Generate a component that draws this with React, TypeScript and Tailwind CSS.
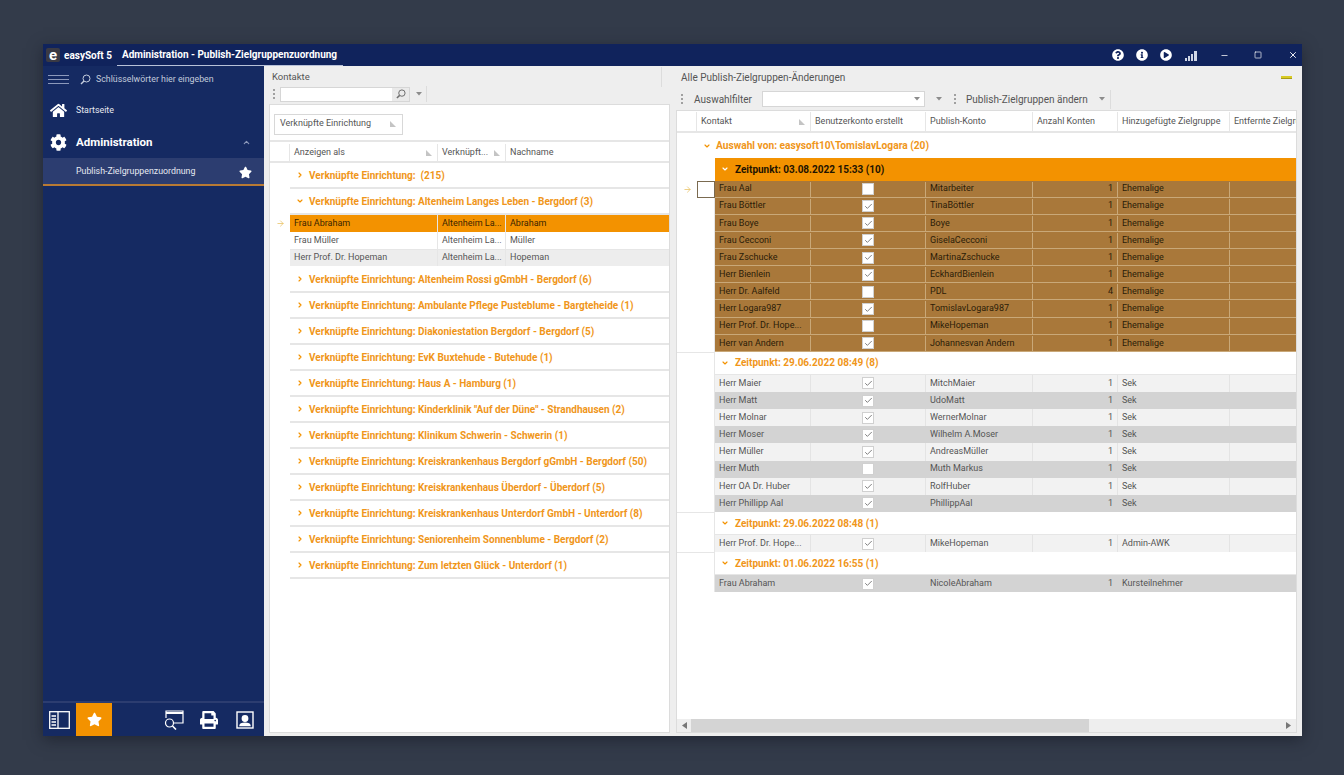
import React from "react";
import { FaHome, FaCog, FaStar, FaQuestionCircle, FaInfoCircle, FaPlayCircle, FaPrint } from "react-icons/fa";
import { ChevronRight, ChevronDown, ChevronUp, ArrowRight, Check, Minus, Square, X } from "lucide-react";

const FONT = "font-['Roboto','Noto_Sans',sans-serif]";

function SortMark() {
  return (
    <svg width="8" height="8" viewBox="0 0 8 8" className="shrink-0">
      <path d="M1 1 V7 H7 Z" fill="#c4c4c4" />
    </svg>
  );
}
function Caret() {
  return (
    <svg width="6" height="4" viewBox="0 0 6 4" className="shrink-0">
      <path d="M0 0 H6 L3 3.5 Z" fill="#8c8c8c" />
    </svg>
  );
}
function Grip() {
  return (
    <div className="flex flex-col gap-[2px] w-[2px] shrink-0">
      <div className="w-[2px] h-[2px] bg-[#a0a0a0]" />
      <div className="w-[2px] h-[2px] bg-[#a0a0a0]" />
      <div className="w-[2px] h-[2px] bg-[#a0a0a0]" />
    </div>
  );
}

function NavBottom() {
  return (
    <div className="h-[35px] border-t-2 border-[#2c3d70] flex items-center shrink-0">
      <div className="w-[27px] flex justify-end">
        <svg width="21" height="18" viewBox="0 0 21 18" fill="none" stroke="#fff" strokeWidth="1.3">
          <rect x="0.7" y="0.7" width="19.6" height="16.6" />
          <path d="M9 1V17" />
          <path d="M2.5 5H7M2.5 8H7M2.5 11H7M2.5 14H7" strokeWidth="1.5" />
        </svg>
      </div>
      <div className="ml-[6px] w-[36px] h-full bg-[#f39200] flex items-center justify-center">
        <FaStar className="text-white w-[15px] h-[15px]" />
      </div>
      <div className="ml-[52px]">
        <svg width="20" height="20" viewBox="0 0 20 20" fill="none" stroke="#fff" strokeWidth="1.2">
          <path d="M2 8V1H19V13H10" />
          <path d="M2 3H19" strokeWidth="2" />
          <circle cx="5.5" cy="13" r="4" />
          <path d="M8.5 16L12 19.5" strokeWidth="1.6" />
        </svg>
      </div>
      <FaPrint className="ml-[16px] text-white w-[18px] h-[18px]" />
      <div className="ml-[18px]">
        <svg width="18" height="18" viewBox="0 0 18 18" fill="none" stroke="#fff" strokeWidth="1.4">
          <rect x="1" y="1" width="16" height="16" />
          <circle cx="9" cy="7.5" r="2.7" fill="#fff" />
          <path d="M4 14.5C4.5 11.5 13.5 11.5 14 14.5Z" fill="#fff" />
        </svg>
      </div>
    </div>
  );
}

function Sidebar() {
  return (
    <aside className="w-[221px] shrink-0 bg-[#152a62] flex flex-col text-white">
      <div className="h-[26px] flex items-center">
        <div className="ml-[5px] w-[21px] flex flex-col gap-[3px]">
          <div className="h-px bg-[#8c99bb]" />
          <div className="h-px bg-[#8c99bb]" />
          <div className="h-px bg-[#8c99bb]" />
        </div>
        <svg width="11" height="11" viewBox="0 0 11 11" fill="none" stroke="#c6cede" strokeWidth="1" className="ml-[11px]">
          <circle cx="6.5" cy="4.5" r="3.5" />
          <path d="M4 7L1 10" strokeWidth="1.4" />
        </svg>
        <span className="ml-[5px] mt-[2px] text-[8.8px] text-[#c3cadb] whitespace-nowrap">Schlüsselwörter hier eingeben</span>
      </div>
      <div className="h-[33px] mt-[2px] flex items-center">
        <FaHome className="ml-[7px] w-[17px] h-[17px]" />
        <span className="ml-[9px] mt-[1px] text-[8.8px] text-[#e6e9f0]">Startseite</span>
      </div>
      <div className="h-[31px] flex items-center">
        <FaCog className="ml-[7px] w-[17px] h-[17px]" />
        <span className="ml-[9px] text-[11.5px] font-bold">Administration</span>
        <ChevronUp className="ml-auto mr-[13px] w-[9px] h-[9px] text-[#8c99bb]" strokeWidth={3} />
      </div>
      <div className="h-[28px] pt-[2px] bg-[#2c3d70] border-b-2 border-[#b87a34] flex items-center">
        <span className="ml-[33px] text-[8.8px] text-[#e6e9f0] whitespace-nowrap">Publish-Zielgruppenzuordnung</span>
        <FaStar className="ml-auto mr-[12px] w-[13px] h-[13px]" />
      </div>
      <div className="flex-1" />
      <NavBottom />
    </aside>
  );
}

function TitleBar() {
  return (
    <header className="h-[22px] shrink-0 bg-[#10235c] flex items-center text-white">
      <div className="ml-[3px] w-[14px] h-[14px] rounded-[2px] bg-[#3a3a44] flex items-center justify-center">
        <span className="text-[15px] leading-[12px] font-bold">e</span>
      </div>
      <span className="ml-[4px] text-[10px] font-bold whitespace-nowrap">easySoft 5</span>
      <div className="ml-[5px] h-full flex items-center border-b border-[#b8c1d8] pl-[5px] pr-[6px]">
        <span className="text-[10px] font-bold whitespace-nowrap">Administration - Publish-Zielgruppenzuordnung</span>
      </div>
      <FaQuestionCircle className="ml-auto w-[12px] h-[12px]" />
      <FaInfoCircle className="ml-[12px] w-[12px] h-[12px]" />
      <FaPlayCircle className="ml-[12px] w-[12px] h-[12px]" />
      <svg width="13" height="11" viewBox="0 0 13 11" className="ml-[13px]" fill="#cfd6e6">
        <rect x="0" y="8" width="2" height="3" />
        <rect x="3" y="6" width="2" height="5" />
        <rect x="6" y="4" width="2" height="7" />
        <rect x="9" y="1" width="3" height="10" />
      </svg>
      <Minus className="ml-[22px] w-[9px] h-[9px]" strokeWidth={2} />
      <Square className="ml-[25px] w-[8px] h-[8px]" strokeWidth={2} />
      <X className="ml-[26px] mr-[4px] w-[10px] h-[10px]" strokeWidth={2.2} />
    </header>
  );
}

const leftRows = [
  { a: "Frau Abraham", b: "Altenheim La...", c: "Abraham", t: "sel" },
  { a: "Frau Müller", b: "Altenheim La...", c: "Müller", t: "w" },
  { a: "Herr Prof. Dr. Hopeman", b: "Altenheim La...", c: "Hopeman", t: "g" },
];
const leftGroups = [
  "Altenheim Rossi gGmbH - Bergdorf (6)",
  "Ambulante Pflege Pusteblume - Bargteheide (1)",
  "Diakoniestation Bergdorf - Bergdorf (5)",
  "EvK Buxtehude - Butehude (1)",
  "Haus A - Hamburg (1)",
  'Kinderklinik "Auf der Düne" - Strandhausen (2)',
  "Klinikum Schwerin - Schwerin (1)",
  "Kreiskrankenhaus Bergdorf gGmbH - Bergdorf (50)",
  "Kreiskrankenhaus Überdorf - Überdorf (5)",
  "Kreiskrankenhaus Unterdorf GmbH - Unterdorf (8)",
  "Seniorenheim Sonnenblume - Bergdorf (2)",
  "Zum letzten Glück - Unterdorf (1)",
];

function LeftGroup({ text, open }: { text: string; open?: boolean }) {
  return (
    <div className="flex h-[26px] shrink-0">
      <div className="w-[20px] shrink-0" />
      <div className="flex-1 flex items-center border-b-2 border-[#e6e6e6]">
        {open ? (
          <ChevronDown className="ml-[6px] w-[8px] h-[8px] text-[#f39200]" strokeWidth={3.5} />
        ) : (
          <ChevronRight className="ml-[6px] w-[8px] h-[8px] text-[#f39200]" strokeWidth={3.5} />
        )}
        <span className="ml-[5px] text-[10px] font-bold text-[#f0961a] whitespace-pre">{text}</span>
      </div>
    </div>
  );
}

function LeftPanel() {
  return (
    <section className="w-[404px] shrink-0 ml-[4px] flex flex-col">
      <div className="h-[21px] flex items-center text-[9.5px] text-[#555]">
        <span className="ml-[4px] mt-[1px]">Kontakte</span>
        <div className="ml-auto mr-[10px] w-px h-[20px] bg-[#dcdcdc]" />
      </div>
      <div className="h-[17px] pb-[3px] flex items-center">
        <div className="ml-[5px]">
          <Grip />
        </div>
        <div className="ml-[5px] w-[130px] h-[15px] flex bg-white border border-[#d6d6d6]">
          <div className="flex-1" />
          <div className="w-[17px] bg-[#eaeaea] flex items-center justify-center">
            <svg width="10" height="10" viewBox="0 0 11 11" fill="none" stroke="#6e6e6e" strokeWidth="1.1">
              <circle cx="6.5" cy="4.5" r="3.5" />
              <path d="M4 7L1 10" strokeWidth="1.6" />
            </svg>
          </div>
        </div>
        <div className="ml-[6px]">
          <Caret />
        </div>
        <div className="ml-[4px] w-px h-[16px] bg-[#dcdcdc]" />
      </div>
      <div className="ml-[1px] w-[401px] flex-1 bg-white border border-[#dcdcdc] flex flex-col mb-[3px] text-[9px] text-[#555]">
        <div className="h-[37px] pt-[3px] shrink-0 flex items-center border-b-2 border-[#e6e6e6]">
          <div className="ml-[4px] w-[129px] h-[21px] flex items-center border border-[#d8d8d8] px-[5px]">
            <span className="whitespace-nowrap">Verknüpfte Einrichtung</span>
            <div className="ml-auto">
              <SortMark />
            </div>
          </div>
        </div>
        <div className="h-[21px] pt-[2px] shrink-0 flex border-b-2 border-[#e6e6e6]">
          <div className="w-[20px] shrink-0 border-r border-[#e6e6e6]" />
          <div className="w-[148px] shrink-0 flex items-center pl-[4px] pr-[4px] border-r border-[#e6e6e6]">
            <span>Anzeigen als</span>
            <div className="ml-auto">
              <SortMark />
            </div>
          </div>
          <div className="w-[68px] shrink-0 flex items-center pl-[4px] pr-[4px] border-r border-[#e6e6e6]">
            <span className="whitespace-nowrap">Verknüpft...</span>
            <div className="ml-auto">
              <SortMark />
            </div>
          </div>
          <div className="flex-1 flex items-center pl-[4px]">Nachname</div>
        </div>
        <LeftGroup text="Verknüpfte Einrichtung:  (215)" />
        <LeftGroup text="Verknüpfte Einrichtung: Altenheim Langes Leben - Bergdorf (3)" open />
        {leftRows.map((r) => (
          <div key={r.a} className="flex h-[17px] shrink-0">
            <div className="w-[20px] shrink-0 flex items-center justify-center">
              {r.t === "sel" && <ArrowRight className="w-[9px] h-[9px] text-[#e8c060]" strokeWidth={2} />}
            </div>
            <div
              className={
                r.t === "sel"
                  ? "flex-1 flex bg-[#f39200] text-[#3a2400]"
                  : r.t === "g"
                    ? "flex-1 flex bg-[#ededed] border-t border-[#e6e6e6]"
                    : "flex-1 flex bg-white"
              }
            >
              <div className="w-[148px] shrink-0 flex items-center pl-[4px] border-r border-[#e6e6e6] whitespace-nowrap">{r.a}</div>
              <div className="w-[68px] shrink-0 flex items-center pl-[4px] border-r border-[#e6e6e6] whitespace-nowrap">{r.b}</div>
              <div className="flex-1 flex items-center pl-[4px]">{r.c}</div>
            </div>
          </div>
        ))}
        <div className="h-px shrink-0" />
        {leftGroups.map((g) => (
          <LeftGroup key={g} text={"Verknüpfte Einrichtung: " + g} />
        ))}
      </div>
    </section>
  );
}

type Row = { k: string; on: boolean; p: string; n: number; z: string };
const g1: Row[] = [
  { k: "Frau Aal", on: false, p: "Mitarbeiter", n: 1, z: "Ehemalige" },
  { k: "Frau Böttler", on: true, p: "TinaBöttler", n: 1, z: "Ehemalige" },
  { k: "Frau Boye", on: true, p: "Boye", n: 1, z: "Ehemalige" },
  { k: "Frau Cecconi", on: true, p: "GiselaCecconi", n: 1, z: "Ehemalige" },
  { k: "Frau Zschucke", on: true, p: "MartinaZschucke", n: 1, z: "Ehemalige" },
  { k: "Herr Bienlein", on: true, p: "EckhardBienlein", n: 1, z: "Ehemalige" },
  { k: "Herr Dr. Aalfeld", on: false, p: "PDL", n: 4, z: "Ehemalige" },
  { k: "Herr Logara987", on: true, p: "TomislavLogara987", n: 1, z: "Ehemalige" },
  { k: "Herr Prof. Dr. Hope...", on: false, p: "MikeHopeman", n: 1, z: "Ehemalige" },
  { k: "Herr van Andern", on: true, p: "Johannesvan Andern", n: 1, z: "Ehemalige" },
];
const g2: Row[] = [
  { k: "Herr Maier", on: true, p: "MitchMaier", n: 1, z: "Sek" },
  { k: "Herr Matt", on: true, p: "UdoMatt", n: 1, z: "Sek" },
  { k: "Herr Molnar", on: true, p: "WernerMolnar", n: 1, z: "Sek" },
  { k: "Herr Moser", on: true, p: "Wilhelm A.Moser", n: 1, z: "Sek" },
  { k: "Herr Müller", on: true, p: "AndreasMüller", n: 1, z: "Sek" },
  { k: "Herr Muth", on: false, p: "Muth Markus", n: 1, z: "Sek" },
  { k: "Herr OA Dr. Huber", on: true, p: "RolfHuber", n: 1, z: "Sek" },
  { k: "Herr Phillipp Aal", on: true, p: "PhillippAal", n: 1, z: "Sek" },
];

function DataRow({ r, kind, first }: { r: Row; kind: "brown" | "light" | "dark"; first?: boolean }) {
  const bg =
    kind === "brown"
      ? "bg-[#a9783a] text-[#2b1c08]"
      : kind === "dark"
        ? "bg-[#d3d3d3] text-[#555]"
        : "bg-[#f2f2f2] text-[#555]";
  const line = kind === "brown" ? "border-[#c9a878]" : kind === "dark" ? "border-[#d3d3d3]" : "border-[#e4e4e4]";
  return (
    <div className="flex h-[17.15px] shrink-0">
      <div className="w-[20px] shrink-0 flex items-center justify-center">
        {first && <ArrowRight className="w-[9px] h-[9px] text-[#e8c060]" strokeWidth={2} />}
      </div>
      <div
        className={
          first
            ? "w-[18px] shrink-0 border border-[#7a6a50] bg-white"
            : "w-[18px] shrink-0 border-r border-[#e6e6e6]"
        }
      />
      <div className={"flex-1 flex " + bg + (kind === "brown" ? " border-b border-[#c9a878] pt-[1px]" : "")}>
        <div className={"w-[96px] shrink-0 flex items-center pl-[4px] border-r whitespace-nowrap " + line}>{r.k}</div>
        <div className={"w-[115px] shrink-0 flex items-center justify-center border-r " + line}>
          <div className="w-[12px] h-[12px] bg-white border border-[#d0d0d0] flex items-center justify-center">
            {r.on && <Check className="w-[9px] h-[9px] text-[#555]" strokeWidth={2} />}
          </div>
        </div>
        <div className={"w-[107px] shrink-0 flex items-center pl-[4px] border-r whitespace-nowrap " + line}>{r.p}</div>
        <div className={"w-[85px] shrink-0 flex items-center justify-end pr-[4px] border-r " + line}>{r.n}</div>
        <div className={"w-[112px] shrink-0 flex items-center pl-[4px] border-r " + line}>{r.z}</div>
        <div className="flex-1" />
      </div>
    </div>
  );
}

function SubGroup({ text }: { text: string }) {
  return (
    <div className="flex h-[23px] shrink-0">
      <div className="w-[20px] shrink-0 border-t border-[#e6e6e6]" />
      <div className="w-[18px] shrink-0 border-t border-r border-[#e6e6e6]" />
      <div className="flex-1 flex items-center border-b border-[#e6e6e6]">
        <ChevronDown className="ml-[6px] w-[8px] h-[8px] text-[#f39200]" strokeWidth={3.5} />
        <span className="ml-[6px] text-[10px] font-bold text-[#f0961a]">{text}</span>
      </div>
    </div>
  );
}

function RightPanel() {
  return (
    <section className="flex-1 min-w-0 ml-[4px] mr-[5px] flex flex-col">
      <div className="h-[22px] flex items-center justify-between text-[10px] text-[#555]">
        <span className="ml-[5px]">Alle Publish-Zielgruppen-Änderungen</span>
        <div className="mr-[5px] w-[11px] h-[3px] bg-[#d8cb24] border-b border-[#a89c18]" />
      </div>
      <div className="h-[22px] flex items-center text-[10px] text-[#555] shrink-0">
        <div className="ml-[5px]">
          <Grip />
        </div>
        <span className="ml-[11px] w-[68px] shrink-0">Auswahlfilter</span>
        <div className="w-[163px] h-[16px] bg-white border border-[#d6d6d6] flex items-center justify-end pr-[4px]">
          <Caret />
        </div>
        <div className="ml-[11px]">
          <Caret />
        </div>
        <div className="ml-[12px]">
          <Grip />
        </div>
        <span className="ml-[10px] whitespace-nowrap">Publish-Zielgruppen ändern</span>
        <div className="ml-[11px]">
          <Caret />
        </div>
        <div className="ml-[5px] w-px h-[19px] bg-[#dcdcdc]" />
      </div>
      <div className="flex-1 min-h-0 bg-white border border-[#dcdcdc] flex flex-col mb-[3px] text-[9px] text-[#555] overflow-hidden">
        <div className="h-[22px] pt-[1px] shrink-0 flex border-b-2 border-[#e6e6e6] whitespace-nowrap">
          <div className="w-[20px] shrink-0 border-r border-[#e6e6e6]" />
          <div className="w-[114px] shrink-0 flex items-center pl-[4px] pr-[4px] border-r border-[#e6e6e6]">
            <span>Kontakt</span>
            <div className="ml-auto">
              <SortMark />
            </div>
          </div>
          <div className="w-[115px] shrink-0 flex items-center pl-[4px] border-r border-[#e6e6e6]">Benutzerkonto erstellt</div>
          <div className="w-[107px] shrink-0 flex items-center pl-[4px] border-r border-[#e6e6e6]">Publish-Konto</div>
          <div className="w-[85px] shrink-0 flex items-center pl-[4px] border-r border-[#e6e6e6]">Anzahl Konten</div>
          <div className="w-[112px] shrink-0 flex items-center pl-[4px] border-r border-[#e6e6e6]">Hinzugefügte Zielgruppe</div>
          <div className="flex-1 min-w-0 flex items-center pl-[4px] overflow-hidden">Entfernte Zielgruppe</div>
        </div>
        <div className="flex h-[25px] shrink-0">
          <div className="w-[20px] shrink-0" />
          <div className="flex-1 flex items-center">
            <ChevronDown className="ml-[6px] w-[8px] h-[8px] text-[#f39200]" strokeWidth={3.5} />
            <span className="ml-[5px] text-[10.2px] font-bold text-[#f0961a]">Auswahl von: easysoft10\TomislavLogara (20)</span>
          </div>
        </div>
        <div className="flex h-[22.5px] shrink-0">
          <div className="w-[38px] shrink-0" />
          <div className="flex-1 flex items-center bg-[#f39200]">
            <ChevronDown className="ml-[6px] w-[8px] h-[8px] text-white" strokeWidth={3.5} />
            <span className="ml-[6px] text-[10px] font-bold text-[#1f1400]">Zeitpunkt: 03.08.2022 15:33 (10)</span>
          </div>
        </div>
        {g1.map((r, i) => (
          <DataRow key={r.k} r={r} kind="brown" first={i === 0} />
        ))}
        <SubGroup text="Zeitpunkt: 29.06.2022 08:49 (8)" />
        {g2.map((r, i) => (
          <DataRow key={r.k} r={r} kind={i % 2 === 0 ? "light" : "dark"} />
        ))}
        <SubGroup text="Zeitpunkt: 29.06.2022 08:48 (1)" />
        <DataRow r={{ k: "Herr Prof. Dr. Hope...", on: true, p: "MikeHopeman", n: 1, z: "Admin-AWK" }} kind="light" />
        <SubGroup text="Zeitpunkt: 01.06.2022 16:55 (1)" />
        <DataRow r={{ k: "Frau Abraham", on: true, p: "NicoleAbraham", n: 1, z: "Kursteilnehmer" }} kind="dark" />
        <div className="flex-1" />
        <div className="h-[13px] shrink-0 bg-[#eeeeee] flex items-center">
          <svg width="5" height="7" viewBox="0 0 5 7" className="ml-[5px] shrink-0">
            <path d="M5 0V7L0 3.5Z" fill="#777" />
          </svg>
          <div className="ml-[4px] w-[398px] h-full bg-[#d4d4d4]" />
          <svg width="5" height="7" viewBox="0 0 5 7" className="ml-auto mr-[5px] shrink-0">
            <path d="M0 0V7L5 3.5Z" fill="#777" />
          </svg>
        </div>
      </div>
    </section>
  );
}

export default function App() {
  return (
    <div className={"w-[1344px] h-[775px] bg-[#333b4a] overflow-hidden pt-[44px] pl-[43px] " + FONT}>
      <div className="w-[1259px] h-[692px] flex flex-col shadow-[0_4px_14px_rgba(20,24,34,0.55)]">
        <TitleBar />
        <div className="flex-1 min-h-0 flex">
          <Sidebar />
          <main className="flex-1 min-w-0 flex bg-[#eeeeee]">
            <LeftPanel />
            <RightPanel />
          </main>
        </div>
      </div>
    </div>
  );
}
